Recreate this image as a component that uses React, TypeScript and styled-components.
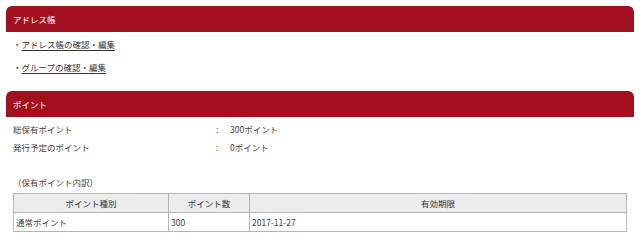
import React from "react";
import styled, { createGlobalStyle } from "styled-components";

const Global = createGlobalStyle`
  html, body { margin: 0; padding: 0; background: #fff; }
  body {
    font-family: "Noto Sans CJK JP", "Noto Sans", sans-serif;
    font-size: 8.5px;
    color: #444;
  }
`;

const Page = styled.div`
  padding: 6px 6px 0;
  display: flex;
  flex-direction: column;
`;

const Section = styled.section`
  display: flex;
  flex-direction: column;
`;

const SectionHeader = styled.h2`
  margin: 0;
  height: 26px;
  line-height: 26px;
  padding-left: 7px;
  background: #a20f1f;
  color: #fff;
  font-size: 8.5px;
  font-weight: normal;
  border-radius: 6px 6px 0 0;
`;

const LinkList = styled.ul`
  list-style: none;
  margin: 0;
  padding: 1px 7px 12px;
  display: flex;
  flex-direction: column;
`;

const LinkItem = styled.li`
  height: 23px;
  line-height: 23px;
  color: #444;
`;

const Link = styled.a`
  color: #333;
  text-decoration: underline;
  text-underline-offset: 1.5px;
`;

const InfoRows = styled.div`
  padding: 3px 7px 0;
  display: flex;
  flex-direction: column;
`;

const InfoRow = styled.div`
  display: grid;
  grid-template-columns: 203px 14px 1fr;
  height: 18px;
  line-height: 18px;
`;

const Note = styled.div`
  margin-top: 17px;
  padding-left: 7px;
  height: 18px;
  line-height: 18px;
`;

const Table = styled.table`
  margin: 2px 7px 0;
  width: calc(100% - 14px);
  border-collapse: collapse;
  table-layout: fixed;
`;

const Th = styled.th<{ $w?: number }>`
  ${(p) => (p.$w ? `width: ${p.$w}px;` : "")}
  background: #ececec;
  border: 1px solid #b4b4b4;
  height: 18px;
  padding: 0;
  font-weight: normal;
  color: #333;
  text-align: center;
`;

const Td = styled.td`
  border: 1px solid #b4b4b4;
  height: 18px;
  padding: 0 2px;
  color: #444;
`;

export default function App() {
  return (
    <>
      <Global />
      <Page>
        <Section>
          <SectionHeader>アドレス帳</SectionHeader>
          <LinkList>
            <LinkItem>
              ・<Link>アドレス帳の確認・編集</Link>
            </LinkItem>
            <LinkItem>
              ・<Link>グループの確認・編集</Link>
            </LinkItem>
          </LinkList>
        </Section>
        <Section>
          <SectionHeader>ポイント</SectionHeader>
          <InfoRows>
            <InfoRow>
              <span>総保有ポイント</span>
              <span>:</span>
              <span>300ポイント</span>
            </InfoRow>
            <InfoRow>
              <span>発行予定のポイント</span>
              <span>:</span>
              <span>0ポイント</span>
            </InfoRow>
          </InfoRows>
          <Note>（保有ポイント内訳）</Note>
          <Table>
            <thead>
              <tr>
                <Th $w={154}>ポイント種別</Th>
                <Th $w={80}>ポイント数</Th>
                <Th>有効期限</Th>
              </tr>
            </thead>
            <tbody>
              <tr>
                <Td>通常ポイント</Td>
                <Td>300</Td>
                <Td>2017-11-27</Td>
              </tr>
            </tbody>
          </Table>
        </Section>
      </Page>
    </>
  );
}
